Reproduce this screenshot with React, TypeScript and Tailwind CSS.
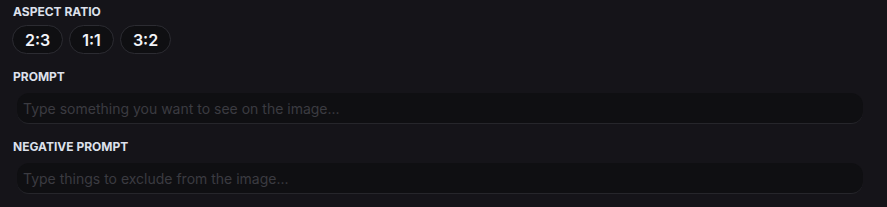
const RATIOS = ['2:3', '1:1', '3:2'];

function Label({ children }: { children: React.ReactNode }) {
  return <p className="text-[12px] leading-4 font-bold uppercase text-[#dde1ec]">{children}</p>;
}

function Field({ placeholder }: { placeholder: string }) {
  return (
    <input
      placeholder={placeholder}
      className="mt-2 h-[31px] w-[846px] ml-1 rounded-[12px] border-b border-[#26262b] bg-[#0f0f12] px-[6px] text-[14px] text-white outline-none placeholder:text-[#3b3b41]"
    />
  );
}

export default function App() {
  return (
    <div className="min-h-[207px] w-full bg-[#151419] px-[13px] pt-[4px] font-['Inter',sans-serif]">
      <Label>Aspect Ratio</Label>
      <div className="mt-[5px] flex gap-[6px] -ml-px">
        {RATIOS.map((r) => (
          <button
            key={r}
            className="h-[29px] rounded-full border border-[#2c2c32] bg-[#0f0f12] px-[12px] text-[16px] font-semibold text-[#f1f3f8]"
          >
            {r}
          </button>
        ))}
      </div>
      <div className="mt-[15px]">
        <Label>Prompt</Label>
        <Field placeholder="Type something you want to see on the image..." />
      </div>
      <div className="mt-[15px]">
        <Label>Negative Prompt</Label>
        <Field placeholder="Type things to exclude from the image..." />
      </div>
    </div>
  );
}
